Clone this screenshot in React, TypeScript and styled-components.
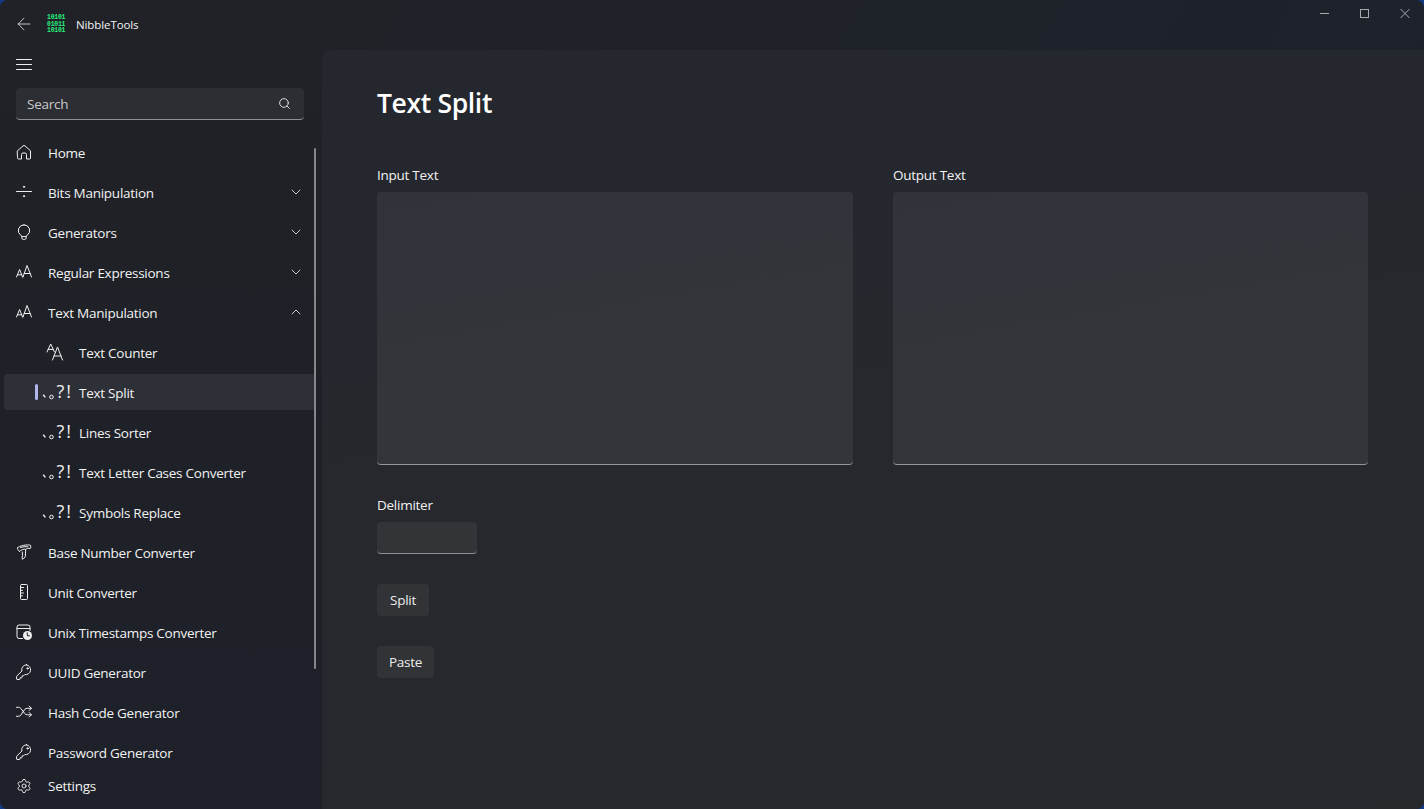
import React from 'react'
import styled, { createGlobalStyle } from 'styled-components'
import { ArrowLeft, ChevronDown, ChevronUp, Search, Settings } from 'lucide-react'

const GlobalStyle = createGlobalStyle`
  html, body {
    margin: 0;
    background: #123a86;
  }
  * {
    box-sizing: border-box;
  }
`

const Window = styled.div`
  width: 1424px;
  height: 809px;
  display: grid;
  grid-template-columns: 322px 1fr;
  overflow: hidden;
  border-radius: 8px;
  position: relative;
  color: #f2f2f2;
  font-family: 'Open Sans', 'Noto Sans', sans-serif;
  font-size: 13.5px;
  letter-spacing: -0.26px;
  background: linear-gradient(120deg, #202227 0%, #1f2229 45%, #1b222d 100%);
`

const Sidebar = styled.aside`
  display: flex;
  flex-direction: column;
  height: 809px;
  background: linear-gradient(180deg, #202227 0%, #1f2128 50%, #1e212a 100%);
  position: relative;
`

const AppTitleBar = styled.div`
  height: 48px;
  display: flex;
  align-items: center;
  padding-left: 14px;
  font-size: 11.5px;
  letter-spacing: -0.1px;
`

const Logo = styled.div`
  width: 20px;
  margin: 2px 9px 0 13px;
  color: #26f27e;
  font-family: 'Liberation Mono', monospace;
  font-size: 6.4px;
  font-weight: 700;
  line-height: 6.5px;
  letter-spacing: -0.2px;
  white-space: pre;
`

const MenuButton = styled.div`
  height: 32px;
  padding-left: 16px;
  display: flex;
  align-items: center;
`

const SearchBox = styled.div`
  margin: 8px 18px 14px 16px;
  height: 32px;
  padding: 0 13px 0 11px;
  display: flex;
  align-items: center;
  justify-content: space-between;
  background: #2d2e33;
  border-radius: 4px;
  border-bottom: 1px solid #8e8f92;
  color: #c9c9cb;
`

const NavList = styled.nav`
  height: 634px;
  overflow: hidden;
  padding-right: 7px;
`

const NavItem = styled.div<{ $child?: boolean; $selected?: boolean }>`
  position: relative;
  height: 36px;
  margin: 0 0 4px 4px;
  padding: ${(p) => (p.$child ? '0 11px 0 43px' : '0 11px 0 12px')};
  display: flex;
  align-items: center;
  gap: 16px;
  border-radius: 4px;
  background: ${(p) => (p.$selected ? '#2e3038' : 'transparent')};
`

const Indicator = styled.span`
  position: absolute;
  left: 31px;
  top: 10px;
  width: 3px;
  height: 16px;
  border-radius: 2px;
  background: #b3b6ea;
`

const IconSlot = styled.span`
  width: 16px;
  height: 16px;
  flex: none;
  display: flex;
  overflow: visible;
`

const NavLabel = styled.span`
  flex: 1;
  padding-top: 2px;
  white-space: nowrap;
`

const FooterLabel = styled(NavLabel)`
  padding-top: 0;
`

const Scrollbar = styled.div`
  position: absolute;
  left: 314px;
  top: 148px;
  width: 2px;
  height: 521px;
  border-radius: 1px;
  background: #85878b;
`

const SidebarFooter = styled.div`
  height: 36px;
  margin-left: 4px;
  padding-left: 12px;
  display: flex;
  align-items: center;
  gap: 16px;
`

const Main = styled.main`
  display: flex;
  flex-direction: column;
  min-width: 0;
`

const CaptionBar = styled.div`
  height: 50px;
  flex: none;
  display: flex;
  justify-content: flex-end;
  align-items: flex-start;
  padding: 8px 11px 0 0;
  gap: 24px;
`

const CaptionButton = styled.svg`
  width: 16px;
  height: 11px;
  overflow: visible;
  stroke: #a6a9ae;
  fill: none;
`

const ContentPane = styled.section`
  flex: 1;
  padding: 34px 56px 0 55px;
  border-top-left-radius: 8px;
  background: linear-gradient(170deg, #24272e 0%, #26282e 45%, #27282c 100%);
`

const PageTitle = styled.h1`
  margin: 0 0 43px;
  height: 38px;
  line-height: 38px;
  font-size: 26.5px;
  font-weight: 600;
  letter-spacing: -0.35px;
  color: #ffffff;
`

const EditorGrid = styled.div`
  display: grid;
  grid-template-columns: 476px 475px;
  gap: 40px;
  margin-bottom: 30px;
`

const Field = styled.label`
  display: block;
`

const FieldLabel = styled.div`
  height: 20px;
  line-height: 20px;
  margin-bottom: 7px;
`

const TextBox = styled.textarea`
  display: block;
  width: 100%;
  height: 273px;
  resize: none;
  border: none;
  border-bottom: 1px solid #96979a;
  border-radius: 4px;
  outline: none;
  background: linear-gradient(170deg, #303339 0%, #32353a 60%, #333539 100%);
`

const SmallInput = styled.input`
  display: block;
  width: 100px;
  height: 32px;
  border: none;
  border-bottom: 1px solid #8e8f92;
  border-radius: 4px;
  outline: none;
  background: #333438;
  margin-bottom: 30px;
`

const ActionButton = styled.button`
  display: block;
  min-width: 52px;
  height: 32px;
  padding: 0 12px;
  margin-bottom: 30px;
  border: none;
  border-radius: 4px;
  background: #323337;
  color: #ececec;
  font: inherit;
  letter-spacing: inherit;
`

const Glyph = styled.svg`
  width: 16px;
  height: 16px;
  flex: none;
  overflow: visible;
  fill: none;
  stroke: #f0f0f0;
  stroke-width: 1;
  stroke-linecap: round;
  stroke-linejoin: round;
`

const PunctSvg = styled.svg`
  width: 30px;
  height: 20px;
  margin: -3px 0 0 -5px;
  flex: none;
  overflow: visible;
  fill: none;
  stroke: #f0f0f0;
  stroke-width: 1;
`

const PunctText = styled.text`
  font-family: 'Open Sans', sans-serif;
  font-weight: 400;
  font-size: 18px;
  letter-spacing: 2px;
  fill: #f0f0f0;
  stroke: none;
`

const HomeIcon = () => (
  <Glyph viewBox="0 0 16 16">
    <path d="M1.5 6.8 7 1.9a1.5 1.5 0 0 1 2 0l5.5 4.9V14a1 1 0 0 1-1 1h-3V10.5A1.5 1.5 0 0 0 9 9H7a1.5 1.5 0 0 0-1.5 1.5V15h-3a1 1 0 0 1-1-1Z" />
  </Glyph>
)

const DivideIcon = () => (
  <Glyph viewBox="0 0 16 16">
    <path d="M0.5 7.5h15" />
    <circle cx="8" cy="2.8" r=".6" fill="#eee" />
    <circle cx="8" cy="12.2" r=".6" fill="#eee" />
  </Glyph>
)

const BulbIcon = () => (
  <Glyph viewBox="0 0 16 16">
    <path d="M8 .8a5.7 5.7 0 0 0-3.2 10.4c.7.5 1 1 1 1.8v.8A1.7 1.7 0 0 0 7.5 15.5h1a1.7 1.7 0 0 0 1.7-1.7V13c0-.8.3-1.3 1-1.8A5.7 5.7 0 0 0 8 .8Z" />
    <path d="M6 12.6h4" />
  </Glyph>
)

const FontSizeIcon = () => (
  <Glyph viewBox="0 0 16 16">
    <path d="M.5 13 3.6 5.5 6.6 13M1.6 10.8h4" />
    <path d="M7 13 11 1.5 15.5 13M8.2 9.5h6" />
  </Glyph>
)

const FontPairIcon = () => (
  <Glyph viewBox="0 0 16 16">
    <path d="M0 8 3.7 0 7.5 8M1.2 5.4h5" />
    <path d="M5.5 16 10.5 3 15.5 16M7 12h7" />
  </Glyph>
)

const PunctIcon = () => (
  <PunctSvg viewBox="0 0 30 20">
    <path d="M1.2 13.8 3.4 16.4" strokeWidth="1.4" />
    <circle cx="9.5" cy="16" r="1.8" />
    <PunctText x="14.5" y="17">?!</PunctText>
  </PunctSvg>
)

const BaseIcon = () => (
  <Glyph viewBox="0 0 16 16">
    <path d="M1.5 3.8C3 1.6 12 .2 14.5 1.3c.5 1 .3 2.6-.2 3.2-2.2-.4-3.6 0-4.6.8" />
    <path d="M3.4 7.4C2.2 6.6 1.4 5.2 1.5 3.8M3.4 7.4c1.5-1.4 4.8-2.8 6.3-2.1l-.4 7.5-2.4 2.5-.9-.6.5-3.3-.2-3.4" />
    <path d="M4.5 3.6c2-.9 5-1.2 7.5-.8" />
  </Glyph>
)

const RulerIcon = () => (
  <Glyph viewBox="0 0 16 16">
    <rect x="4.5" y=".5" width="7" height="15" rx="1" />
    <path d="M4.5 3.5h3M4.5 6.3h2M4.5 9h3M4.5 11.8h2" />
  </Glyph>
)

const TimestampIcon = () => (
  <Glyph viewBox="0 0 16 16">
    <path d="M6.5 14.5H3A2 2 0 0 1 1 12.5V3a2 2 0 0 1 2-2h9a2 2 0 0 1 2 2v3.5" />
    <path d="M1 4.5h13" />
    <circle cx="11.5" cy="11.5" r="4.5" fill="#eee" stroke="none" />
    <path d="M11.3 8.8v3h2.2" stroke="#1f2128" />
  </Glyph>
)

const KeyIcon = () => (
  <Glyph viewBox="0 0 16 16">
    <path d="M10.5.8A4.8 4.8 0 0 0 5.9 7L1 11.9a1.3 1.3 0 0 0-.4 1V15c0 .3.2.5.5.5h2.4c.3 0 .5-.2.5-.5v-1.2h1.5c.3 0 .5-.2.5-.5v-1.4h1.4l1.3-1.3A4.8 4.8 0 1 0 10.5.8Z" />
    <circle cx="11.6" cy="4.4" r=".7" fill="#eee" />
  </Glyph>
)

const ShuffleIcon = () => (
  <Glyph viewBox="0 0 16 16">
    <g transform="translate(0 2.8)">
      <path d="M.5 .5h1.8c1 0 1.8.4 2.5 1.1l3.9 5.1c.8.8 1.5 1.3 2.6 1.3h4" />
      <path d="M.5 9.5h1.8c1 0 1.8-.4 2.5-1.1L8.7 2.6c.7-.8 1.5-1.1 2.6-1.1h4" />
      <path d="M13.2 -.7 15.4 1.5l-2.2 2.2M13.2 5.8 15.4 8l-2.2 2.2" />
    </g>
  </Glyph>
)

const MenuIcon = () => (
  <Glyph viewBox="0 0 16 16">
    <path d="M.5 3.5h15M.5 8.5h15M.5 13.5h15" />
  </Glyph>
)

type NavEntry = {
  label: string
  icon: React.ReactNode
  child?: boolean
  selected?: boolean
  chevron?: 'up' | 'down'
}

const navEntries: NavEntry[] = [
  { label: 'Home', icon: <HomeIcon /> },
  { label: 'Bits Manipulation', icon: <DivideIcon />, chevron: 'down' },
  { label: 'Generators', icon: <BulbIcon />, chevron: 'down' },
  { label: 'Regular Expressions', icon: <FontSizeIcon />, chevron: 'down' },
  { label: 'Text Manipulation', icon: <FontSizeIcon />, chevron: 'up' },
  { label: 'Text Counter', icon: <FontPairIcon />, child: true },
  { label: 'Text Split', icon: <PunctIcon />, child: true, selected: true },
  { label: 'Lines Sorter', icon: <PunctIcon />, child: true },
  { label: 'Text Letter Cases Converter', icon: <PunctIcon />, child: true },
  { label: 'Symbols Replace', icon: <PunctIcon />, child: true },
  { label: 'Base Number Converter', icon: <BaseIcon /> },
  { label: 'Unit Converter', icon: <RulerIcon /> },
  { label: 'Unix Timestamps Converter', icon: <TimestampIcon /> },
  { label: 'UUID Generator', icon: <KeyIcon /> },
  { label: 'Hash Code Generator', icon: <ShuffleIcon /> },
  { label: 'Password Generator', icon: <KeyIcon /> },
]

const App: React.FC = () => {
  return (
    <>
      <GlobalStyle />
      <Window>
        <Sidebar>
          <AppTitleBar>
            <ArrowLeft size={20} strokeWidth={1.2} color="#c4c5c7" />
            <Logo>{'10101\n01011\n10101'}</Logo>
            <span>NibbleTools</span>
          </AppTitleBar>
          <MenuButton>
            <MenuIcon />
          </MenuButton>
          <SearchBox>
            <span>Search</span>
            <Search size={13} strokeWidth={1.7} color="#e8e8e8" />
          </SearchBox>
          <NavList>
            {navEntries.map((entry) => (
              <NavItem key={entry.label} $child={entry.child} $selected={entry.selected}>
                {entry.selected && <Indicator />}
                <IconSlot>{entry.icon}</IconSlot>
                <NavLabel>{entry.label}</NavLabel>
                {entry.chevron === 'down' && <ChevronDown size={16} strokeWidth={1.4} color="#d4d4d6" />}
                {entry.chevron === 'up' && <ChevronUp size={16} strokeWidth={1.4} color="#d4d4d6" />}
              </NavItem>
            ))}
          </NavList>
          <Scrollbar />
          <SidebarFooter>
            <IconSlot>
              <Settings size={16} strokeWidth={1.4} color="#eeeeee" />
            </IconSlot>
            <FooterLabel>Settings</FooterLabel>
          </SidebarFooter>
        </Sidebar>
        <Main>
          <CaptionBar>
            <CaptionButton viewBox="0 0 16 11">
              <path d="M3 5.5h9" />
            </CaptionButton>
            <CaptionButton viewBox="0 0 16 11">
              <rect x="3.5" y="1.5" width="8" height="8" />
            </CaptionButton>
            <CaptionButton viewBox="0 0 16 11">
              <path d="M3.5 1 12.5 10M12.5 1 3.5 10" />
            </CaptionButton>
          </CaptionBar>
          <ContentPane>
            <PageTitle>Text Split</PageTitle>
            <EditorGrid>
              <Field>
                <FieldLabel>Input Text</FieldLabel>
                <TextBox />
              </Field>
              <Field>
                <FieldLabel>Output Text</FieldLabel>
                <TextBox />
              </Field>
            </EditorGrid>
            <Field>
              <FieldLabel>Delimiter</FieldLabel>
              <SmallInput />
            </Field>
            <ActionButton>Split</ActionButton>
            <ActionButton>Paste</ActionButton>
          </ContentPane>
        </Main>
      </Window>
    </>
  )
}

export default App
